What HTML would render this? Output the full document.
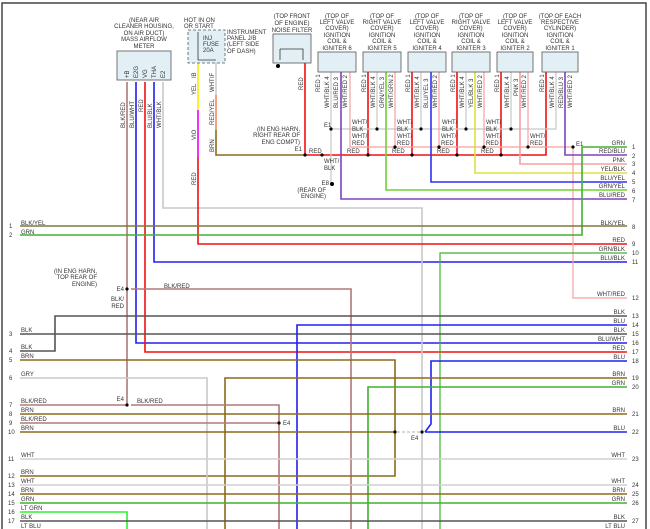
<!DOCTYPE html>
<html><head><meta charset="utf-8"><style>
html,body{margin:0;padding:0;background:#fff}
svg{display:block}
text{font-family:"Liberation Sans",sans-serif;font-size:6px;fill:#333}
.n{font-size:6.5px}
</style></head><body>
<svg width="650" height="529" viewBox="0 0 650 529" xmlns="http://www.w3.org/2000/svg">
<rect x="0" y="0" width="650" height="529" fill="#fff"/>
<path d="M2 529V3H646V529" fill="none" stroke="#444" stroke-width="1.5"/>
<g fill="none" stroke-width="1.6">
<path d="M127 82V405" stroke="#b07878"/>
<path d="M136 82V343H627" stroke="#2020f0"/>
<path d="M145 82V352H627" stroke="#f01010"/>
<path d="M154 82V262H627" stroke="#2020f0"/>
<path d="M163 82V208H422V529" stroke="#c8c8c8"/>
<path d="M198 63V110" stroke="#f0f000"/>
<path d="M198 110V157" stroke="#f000f0"/>
<path d="M198 157V244H627" stroke="#f01010"/>
<path d="M216 63V95" stroke="#ccc"/>
<path d="M216 95V130" stroke="#f08860"/>
<path d="M216 130V155H305" stroke="#8c6a1a"/>
<path d="M305 63V155H546V72" stroke="#f01010"/>
<path d="M368 72V155M412 72V155M457 72V155M501 72V155" stroke="#f01010"/>
<path d="M331 72V183M377 72V129M421 72V129M466 72V129M511 72V129M556 72V129H331" stroke="#c8c8c8" stroke-width="1.2"/>
<path d="M350 72V147H573V298H627M395 72V147M439 72V147M484 72V147M528 72V147" stroke="#f4a0a0" stroke-width="1.2"/>
<path d="M341 72V199H627" stroke="#8040c0"/>
<path d="M386 72V190H627" stroke="#70d030"/>
<path d="M431 72V182H627" stroke="#3030f0"/>
<path d="M475 72V173H627" stroke="#e0e040"/>
<path d="M520 72V164H627" stroke="#f4a0a0"/>
<path d="M565 72V155H627" stroke="#8040c0"/>
<path d="M627 147H582V235H20" stroke="#40b030"/>
<path d="M20 226H627" stroke="#7a7a3a"/>
<path d="M627 253H440V529" stroke="#40b030" stroke-width="1.2"/>
<path d="M131 289H351V529" stroke="#b07878"/>
<path d="M20 351H55V316H627" stroke="#555"/>
<path d="M20 334H627" stroke="#555"/>
<path d="M297 529V325H627" stroke="#2020f0"/>
<path d="M627 361H431V424L425 432" stroke="#2020f0"/>
<path d="M20 360H395V476H20" stroke="#8c6a1a"/>
<path d="M20 378H207V529" stroke="#c8c8c8"/>
<path d="M225 529V378H627" stroke="#8c6a1a"/>
<path d="M368 529V387H627" stroke="#40b030"/>
<path d="M20 405H127M131 405H279V529" stroke="#b07878"/>
<path d="M20 414H627" stroke="#8c6a1a"/>
<path d="M20 423H279" stroke="#b07878"/>
<path d="M20 432H395" stroke="#8c6a1a"/>
<path d="M397 432H422" stroke="#ccc" stroke-dasharray="3 2"/>
<path d="M425 432H627" stroke="#2020f0"/>
<path d="M20 459H627M20 485H627" stroke="#d0d0d0"/>
<path d="M20 494H627" stroke="#8c6a1a"/>
<path d="M20 503H627" stroke="#40b030"/>
<path d="M20 512H127V529" stroke="#30f030"/>
<path d="M20 521H627" stroke="#555"/>
</g>
<g fill="#e2f0f6" stroke="#555" stroke-width="0.8">
<rect x="117" y="51" width="54" height="29"/>
<rect x="273" y="34" width="38" height="29"/>
<rect x="318" y="52" width="38" height="20"/>
<rect x="363" y="52" width="38" height="20"/>
<rect x="408" y="52" width="38" height="20"/>
<rect x="452" y="52" width="38" height="20"/>
<rect x="497" y="52" width="36" height="20"/>
<rect x="542" y="52" width="36" height="20"/>
</g>
<rect x="188" y="30" width="37" height="33" fill="#e2f0f6" stroke="#555" stroke-width="0.8" stroke-dasharray="3 2"/>
<path d="M198 32V60M198 60H216M280 49H303V60M280 49V60" fill="none" stroke="#333" stroke-width="0.8"/>
<g fill="#000">
<circle cx="305" cy="155" r="1.6"/><circle cx="322" cy="155" r="1.6"/><circle cx="368" cy="155" r="1.6"/><circle cx="412" cy="155" r="1.6"/><circle cx="457" cy="155" r="1.6"/><circle cx="501" cy="155" r="1.6"/>
<circle cx="331" cy="129" r="1.6"/><circle cx="377" cy="129" r="1.6"/><circle cx="421" cy="129" r="1.6"/><circle cx="466" cy="129" r="1.6"/><circle cx="511" cy="129" r="1.6"/>
<circle cx="395" cy="147" r="1.6"/><circle cx="439" cy="147" r="1.6"/><circle cx="484" cy="147" r="1.6"/><circle cx="528" cy="147" r="1.6"/><circle cx="573" cy="147" r="1.6"/>
<circle cx="332" cy="184" r="2"/><circle cx="278" cy="66" r="2"/>
<circle cx="127" cy="289" r="1.6"/><circle cx="127" cy="405" r="1.6"/><circle cx="279" cy="423" r="1.6"/><circle cx="395" cy="432" r="1.6"/><circle cx="422" cy="432" r="1.6"/>
</g>
<g text-anchor="middle">
<text x="144" y="22">(NEAR AIR</text><text x="144" y="28">CLEANER HOUSING,</text><text x="144" y="35">ON AIR DUCT)</text><text x="144" y="41">MASS AIRFLOW</text><text x="144" y="48">METER</text>
<text x="292" y="18">(TOP FRONT</text><text x="292" y="25">OF ENGINE)</text><text x="292" y="32">NOISE FILTER</text>
<text x="337" y="18">(TOP OF</text><text x="337" y="24">LEFT VALVE</text><text x="337" y="30">COVER)</text><text x="337" y="37">IGNITION</text><text x="337" y="43">COIL &amp;</text><text x="337" y="50">IGNITER 6</text>
<text x="382" y="18">(TOP OF</text><text x="382" y="24">RIGHT VALVE</text><text x="382" y="30">COVER)</text><text x="382" y="37">IGNITION</text><text x="382" y="43">COIL &amp;</text><text x="382" y="50">IGNITER 5</text>
<text x="427" y="18">(TOP OF</text><text x="427" y="24">LEFT VALVE</text><text x="427" y="30">COVER)</text><text x="427" y="37">IGNITION</text><text x="427" y="43">COIL &amp;</text><text x="427" y="50">IGNITER 4</text>
<text x="471" y="18">(TOP OF</text><text x="471" y="24">RIGHT VALVE</text><text x="471" y="30">COVER)</text><text x="471" y="37">IGNITION</text><text x="471" y="43">COIL &amp;</text><text x="471" y="50">IGNITER 3</text>
<text x="515" y="18">(TOP OF</text><text x="515" y="24">LEFT VALVE</text><text x="515" y="30">COVER)</text><text x="515" y="37">IGNITION</text><text x="515" y="43">COIL &amp;</text><text x="515" y="50">IGNITER 2</text>
<text x="560" y="18">(TOP OF EACH</text><text x="560" y="24">RESPECTIVE</text><text x="560" y="30">CYLINDER)</text><text x="560" y="37">IGNITION</text><text x="560" y="43">COIL &amp;</text><text x="560" y="50">IGNITER 1</text>
</g>
<text x="184" y="22">HOT IN ON</text><text x="184" y="28">OR START</text>
<text x="203" y="40">INJ</text><text x="203" y="46">FUSE</text><text x="203" y="52">20A</text>
<text x="227" y="34">INSTRUMENT</text><text x="227" y="40">PANEL J/B</text><text x="227" y="46">(LEFT SIDE</text><text x="227" y="53">OF DASH)</text>
<g text-anchor="end">
<text x="300" y="131">(IN ENG HARN,</text><text x="300" y="137">RIGHT REAR OF</text><text x="300" y="144">ENG COMPT)</text><text x="302" y="151">E1</text>
<text x="329" y="185">E8</text><text x="326" y="192">(REAR OF</text><text x="326" y="198">ENGINE)</text>
<text x="97" y="273">(IN ENG HARN,</text><text x="97" y="279">TOP REAR OF</text><text x="97" y="286">ENGINE)</text><text x="124" y="291">E4</text>
<text x="124" y="301">BLK/</text><text x="124" y="308">RED</text><text x="124" y="401">E4</text>
</g>
<text x="324" y="163">WHT/</text><text x="324" y="170">BLK</text>
<text x="324" y="127">E1</text>
<g>
<text x="309" y="153">RED</text><text x="347" y="153">RED</text><text x="392" y="153">RED</text><text x="437" y="153">RED</text><text x="481" y="153">RED</text>
<text x="352" y="124">WHT/</text><text x="352" y="131">BLK</text><text x="397" y="124">WHT/</text><text x="397" y="131">BLK</text><text x="442" y="124">WHT/</text><text x="442" y="131">BLK</text><text x="486" y="124">WHT/</text><text x="486" y="131">BLK</text>
<text x="352" y="138">WHT/</text><text x="352" y="145">RED</text><text x="397" y="138">WHT/</text><text x="397" y="145">RED</text><text x="441" y="138">WHT/</text><text x="441" y="145">RED</text><text x="486" y="138">WHT/</text><text x="486" y="145">RED</text><text x="530" y="138">WHT/</text><text x="530" y="145">RED</text>
<text x="576" y="146">E1</text>
<text x="164" y="288">BLK/RED</text><text x="137" y="403">BLK/RED</text><text x="283" y="425">E4</text><text x="411" y="440">E4</text>
</g>
<g font-size="5.5">
<text transform="translate(125,128) rotate(-90)">BLK/RED</text>
<text transform="translate(134,128) rotate(-90)">BLU/WHT</text>
<text transform="translate(143,112) rotate(-90)">RED</text>
<text transform="translate(152,128) rotate(-90)">BLU/BLK</text>
<text transform="translate(161,128) rotate(-90)">WHT/BLK</text>
<text transform="translate(196,95) rotate(-90)">YEL</text>
<text transform="translate(196,140) rotate(-90)">VIO</text>
<text transform="translate(196,185) rotate(-90)">RED</text>
<text transform="translate(214,92) rotate(-90)">WHT</text>
<text transform="translate(214,125) rotate(-90)">RED/YEL</text>
<text transform="translate(214,152) rotate(-90)">BRN</text>
<text transform="translate(303,90) rotate(-90)">RED</text>
<text transform="translate(196,78) rotate(-90)">IB</text>
<text transform="translate(214,78) rotate(-90)">IF</text>
</g>
<g font-size="5.2">
<text transform="translate(320,92) rotate(-90)">RED 1</text><text transform="translate(329,108) rotate(-90)">WHT/BLK 4</text><text transform="translate(338,108) rotate(-90)">BLU/RED 3</text><text transform="translate(347,108) rotate(-90)">WHT/RED 2</text>
<text transform="translate(366,92) rotate(-90)">RED 1</text><text transform="translate(375,108) rotate(-90)">WHT/BLK 4</text><text transform="translate(384,108) rotate(-90)">GRN/YEL 3</text><text transform="translate(393,108) rotate(-90)">WHT/GRN 2</text>
<text transform="translate(410,92) rotate(-90)">RED 1</text><text transform="translate(419,108) rotate(-90)">WHT/BLK 4</text><text transform="translate(428,108) rotate(-90)">BLU/YEL 3</text><text transform="translate(437,108) rotate(-90)">WHT/RED 2</text>
<text transform="translate(455,92) rotate(-90)">RED 1</text><text transform="translate(464,108) rotate(-90)">WHT/BLK 4</text><text transform="translate(473,108) rotate(-90)">YEL/BLK 3</text><text transform="translate(482,108) rotate(-90)">WHT/RED 2</text>
<text transform="translate(499,92) rotate(-90)">RED 1</text><text transform="translate(509,108) rotate(-90)">WHT/BLK 4</text><text transform="translate(518,96) rotate(-90)">PNK 3</text><text transform="translate(526,108) rotate(-90)">WHT/RED 2</text>
<text transform="translate(544,92) rotate(-90)">RED 1</text><text transform="translate(554,108) rotate(-90)">WHT/BLK 4</text><text transform="translate(563,108) rotate(-90)">RED/BLU 3</text><text transform="translate(572,108) rotate(-90)">WHT/RED 2</text>
</g>
<g font-size="5">
<text transform="translate(129,78) rotate(-90)">+B</text><text transform="translate(138,78) rotate(-90)">E2G</text><text transform="translate(147,78) rotate(-90)">VG</text><text transform="translate(156,78) rotate(-90)">THA</text><text transform="translate(165,78) rotate(-90)">E2</text>
</g>
<g class="n">
<text x="9" y="228">1</text><text x="9" y="237">2</text><text x="9" y="336">3</text><text x="9" y="353">4</text><text x="9" y="362">5</text><text x="9" y="380">6</text><text x="9" y="407">7</text><text x="9" y="416">8</text><text x="9" y="425">9</text><text x="8" y="434">10</text><text x="8" y="461">11</text><text x="8" y="478">12</text><text x="8" y="487">13</text><text x="8" y="496">14</text><text x="8" y="505">15</text><text x="8" y="514">16</text><text x="8" y="523">17</text>
</g>
<g>
<text x="21" y="225">BLK/YEL</text><text x="21" y="234">GRN</text><text x="21" y="332">BLK</text><text x="21" y="349">BLK</text><text x="21" y="358">BRN</text><text x="21" y="376">GRY</text><text x="21" y="403">BLK/RED</text><text x="21" y="412">BRN</text><text x="21" y="421">BLK/RED</text><text x="21" y="430">BRN</text><text x="21" y="457">WHT</text><text x="21" y="474">BRN</text><text x="21" y="483">WHT</text><text x="21" y="492">BRN</text><text x="21" y="501">GRN</text><text x="21" y="510">LT GRN</text><text x="21" y="519">BLK</text><text x="21" y="528">LT BLU</text>
</g>
<g text-anchor="end">
<text x="625" y="145">GRN</text><text x="625" y="153">RED/BLU</text><text x="625" y="162">PNK</text><text x="625" y="171">YEL/BLK</text><text x="625" y="180">BLU/YEL</text><text x="625" y="188">GRN/YEL</text><text x="625" y="197">BLU/RED</text>
<text x="625" y="225">BLK/YEL</text><text x="625" y="242">RED</text><text x="625" y="251">GRN/BLK</text><text x="625" y="260">BLU/BLK</text><text x="625" y="296">WHT/RED</text><text x="625" y="314">BLK</text><text x="625" y="323">BLU</text><text x="625" y="332">BLK</text><text x="625" y="341">BLU/WHT</text><text x="625" y="350">RED</text><text x="625" y="359">BLU</text><text x="625" y="376">BRN</text><text x="625" y="385">GRN</text><text x="625" y="412">BRN</text><text x="625" y="430">BLU</text><text x="625" y="457">WHT</text><text x="625" y="483">WHT</text><text x="625" y="492">BRN</text><text x="625" y="501">GRN</text><text x="625" y="519">BLK</text><text x="625" y="528">LT BLU</text>
</g>
<g class="n">
<text x="632" y="149">1</text><text x="632" y="158">2</text><text x="632" y="166">3</text><text x="632" y="175">4</text><text x="632" y="184">5</text><text x="632" y="193">6</text><text x="632" y="202">7</text><text x="632" y="229">8</text><text x="632" y="246">9</text><text x="632" y="255">10</text><text x="632" y="264">11</text><text x="632" y="300">12</text><text x="632" y="318">13</text><text x="632" y="327">14</text><text x="632" y="336">15</text><text x="632" y="345">16</text><text x="632" y="354">17</text><text x="632" y="363">18</text><text x="632" y="380">19</text><text x="632" y="389">20</text><text x="632" y="416">21</text><text x="632" y="434">22</text><text x="632" y="461">23</text><text x="632" y="487">24</text><text x="632" y="496">25</text><text x="632" y="505">26</text><text x="632" y="523">27</text>
</g>
</svg>
</body></html>
